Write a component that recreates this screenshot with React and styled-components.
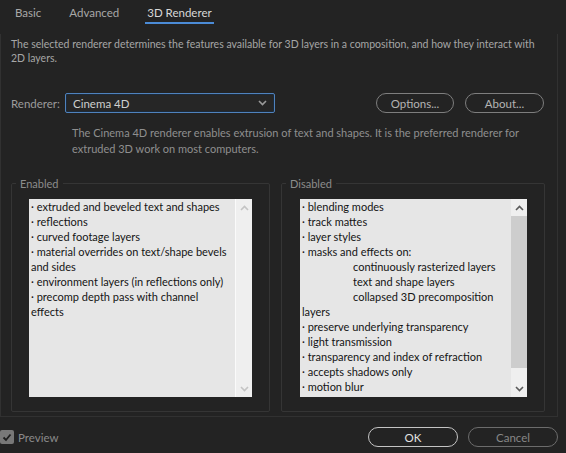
import React from 'react'
import styled, { createGlobalStyle } from 'styled-components'

const GlobalStyle = createGlobalStyle`
  html, body {
    margin: 0;
    padding: 0;
    background: #232323;
  }
  body {
    font-family: Lato, 'Noto Sans', sans-serif;
  }
`

const Window = styled.div`
  width: 566px;
  height: 453px;
  background: #232323;
  display: flex;
  flex-direction: column;
  overflow: hidden;
`

const TabBar = styled.div`
  height: 34px;
  display: flex;
  align-items: flex-start;
  padding-left: 13px;
`

const Tab = styled.div`
  margin-right: 24px;
  padding: 6px 2px 0 2px;
  height: 16px;
  font-size: 11.5px;
  color: ${(p) => (p.$active ? '#d8d8d8' : '#a8a8a8')};
  border-bottom: 2px solid ${(p) => (p.$active ? '#4b8bd6' : 'transparent')};
`

const Panel = styled.div`
  width: 556px;
  height: 382px;
  border-left: 1px solid #313131;
  border-right: 1px solid #313131;
  border-bottom: 1px solid #313131;
  display: flex;
  flex-direction: column;
`

const Description = styled.p`
  margin: 3px 0 0 10px;
  font-size: 10.5px;
  line-height: 14px;
  white-space: nowrap;
  color: #a6a6a6;
`

const RendererRow = styled.div`
  display: flex;
  align-items: center;
  margin: 28px 0 0 10px;
  height: 20px;
`

const Label = styled.span`
  width: 54px;
  font-size: 11.5px;
  color: #9c9c9c;
`

const Select = styled.div`
  box-sizing: border-box;
  width: 210px;
  height: 20px;
  border: 1px solid #4f82bd;
  box-shadow: inset 0 0 0 1px #1c2a3a;
  border-radius: 2px;
  background: #262626;
  display: flex;
  align-items: center;
  justify-content: space-between;
  padding: 0 7px 0 7px;
  font-size: 11.5px;
  color: #cfcfcf;
`

const PillButton = styled.div`
  box-sizing: border-box;
  width: ${(p) => p.$w}px;
  height: ${(p) => p.$h || 20}px;
  margin-left: ${(p) => p.$ml || 0}px;
  border: 1px solid ${(p) => p.$border};
  border-radius: 10px;
  display: flex;
  align-items: center;
  justify-content: center;
  font-size: 11.5px;
  color: ${(p) => p.$color};
`

const Info = styled.p`
  margin: 12px 0 0 71px;
  font-size: 11px;
  line-height: 16px;
  white-space: nowrap;
  color: #8f8f8f;
`

const Groups = styled.div`
  display: flex;
  margin: 20px 0 0 10px;
`

const GroupBox = styled.fieldset`
  box-sizing: border-box;
  width: ${(p) => p.$w}px;
  height: 235px;
  margin: 0 ${(p) => p.$mr || 0}px 0 0;
  padding: 9px 17px 0 0;
  border: 1px solid #353535;
  border-radius: 2px;
`

const Legend = styled.legend`
  margin-left: 4px;
  padding: 0 4px;
  font-size: 11px;
  color: #8c8c8c;
`

const ListBox = styled.div`
  height: 198px;
  margin-left: ${(p) => p.$ml}px;
  background: #e6e6e6;
  display: flex;
  overflow: hidden;
`

const ListText = styled.div`
  flex: 1;
  padding: 0 2px;
  font-size: 11px;
  line-height: 15px;
  white-space: nowrap;
  overflow: hidden;
  color: #141414;
`

const Item = styled.div`
  padding-left: ${(p) => (p.$sub ? 51 : 0)}px;
`

const Scrollbar = styled.div`
  width: 16px;
  background: #efefef;
  border-left: 1px solid ${(p) => (p.$active ? '#e6e6e6' : '#fafafa')};
  display: flex;
  flex-direction: column;
`

const Arrow = styled.div`
  height: 17px;
  display: flex;
  align-items: center;
  justify-content: center;
`

const Track = styled.div`
  flex: 1;
  display: flex;
  flex-direction: column;
`

const Thumb = styled.div`
  height: 152px;
  background: #cdcdcd;
`

const Footer = styled.div`
  flex: 1;
  display: flex;
  align-items: center;
  padding-top: 4px;
`

const CheckBox = styled.div`
  width: 14px;
  height: 14px;
  border-radius: 2px;
  background: #787878;
  display: flex;
  align-items: center;
  justify-content: center;
  margin-right: 4px;
`

const PreviewLabel = styled.span`
  font-size: 11.5px;
  color: #8a8a8a;
`

const FooterButtons = styled.div`
  margin-left: auto;
  margin-right: 8px;
  display: flex;
`

const Chevron = ({ up, color }) => (
  <svg width="9" height="6" viewBox="0 0 9 6">
    <path
      d={up ? 'M1 5 L4.5 1.5 L8 5' : 'M1 1 L4.5 4.5 L8 1'}
      fill="none"
      stroke={color}
      strokeWidth="1.6"
    />
  </svg>
)

const enabled = [
  { t: '· extruded and beveled text and shapes' },
  { t: '· reflections' },
  { t: '· curved footage layers' },
  { t: '· material overrides on text/shape bevels' },
  { t: 'and sides' },
  { t: '· environment layers (in reflections only)' },
  { t: '· precomp depth pass with channel' },
  { t: 'effects' },
]

const disabled = [
  { t: '· blending modes' },
  { t: '· track mattes' },
  { t: '· layer styles' },
  { t: '· masks and effects on:' },
  { t: 'continuously rasterized layers', sub: true },
  { t: 'text and shape layers', sub: true },
  { t: 'collapsed 3D precomposition', sub: true },
  { t: 'layers' },
  { t: '· preserve underlying transparency' },
  { t: '· light transmission' },
  { t: '· transparency and index of refraction' },
  { t: '· accepts shadows only' },
  { t: '· motion blur' },
]

const App = () => {
  return (
    <Window>
      <GlobalStyle />
      <TabBar>
        <Tab>Basic</Tab>
        <Tab>Advanced</Tab>
        <Tab $active>3D Renderer</Tab>
      </TabBar>
      <Panel>
        <Description>
          The selected renderer determines the features available for 3D layers in a composition, and how they interact with
          <br />
          2D layers.
        </Description>
        <RendererRow>
          <Label>Renderer:</Label>
          <Select>
            <span>Cinema 4D</span>
            <Chevron color="#9a9a9a" />
          </Select>
          <PillButton $w={78} $ml={101} $border="#7e7e7e" $color="#b4b4b4">Options...</PillButton>
          <PillButton $w={79} $ml={11} $border="#7e7e7e" $color="#b4b4b4">About...</PillButton>
        </RendererRow>
        <Info>
          The Cinema 4D renderer enables extrusion of text and shapes. It is the preferred renderer for
          <br />
          extruded 3D work on most computers.
        </Info>
        <Groups>
          <GroupBox $w={259} $mr={11}>
            <Legend>Enabled</Legend>
            <ListBox $ml={17}>
              <ListText>
                {enabled.map((i) => (
                  <Item key={i.t}>{i.t}</Item>
                ))}
              </ListText>
              <Scrollbar>
                <Arrow><Chevron up color="#c4c4c4" /></Arrow>
                <Track />
                <Arrow><Chevron color="#c4c4c4" /></Arrow>
              </Scrollbar>
            </ListBox>
          </GroupBox>
          <GroupBox $w={264}>
            <Legend>Disabled</Legend>
            <ListBox $ml={18}>
              <ListText>
                {disabled.map((i) => (
                  <Item key={i.t} $sub={i.sub}>{i.t}</Item>
                ))}
              </ListText>
              <Scrollbar $active>
                <Arrow><Chevron up color="#5a5a5a" /></Arrow>
                <Track>
                  <Thumb />
                </Track>
                <Arrow><Chevron color="#5a5a5a" /></Arrow>
              </Scrollbar>
            </ListBox>
          </GroupBox>
        </Groups>
      </Panel>
      <Footer>
        <CheckBox>
          <svg width="10" height="9" viewBox="0 0 10 9">
            <path d="M1.5 4.5 L4 7 L8.5 1.5" fill="none" stroke="#1e1e1e" strokeWidth="1.8" />
          </svg>
        </CheckBox>
        <PreviewLabel>Preview</PreviewLabel>
        <FooterButtons>
          <PillButton $w={90} $border="#c4c4c4" $color="#e2e2e2">OK</PillButton>
          <PillButton $w={90} $ml={10} $border="#6c6c6c" $color="#878787">Cancel</PillButton>
        </FooterButtons>
      </Footer>
    </Window>
  )
}

export default App
